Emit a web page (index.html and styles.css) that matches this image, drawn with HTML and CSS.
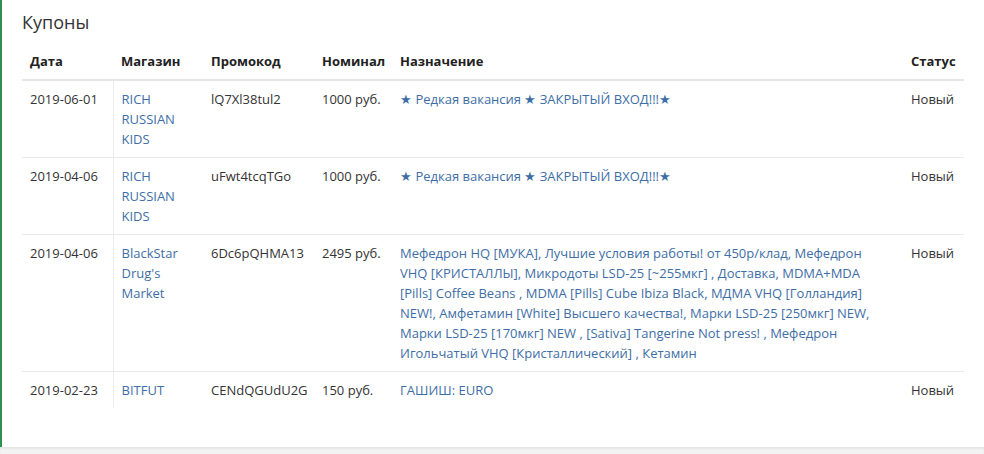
FILE: index.html
```html
<!DOCTYPE html>
<html lang="ru">
<head>
<meta charset="utf-8">
<title>Купоны</title>
<link rel="stylesheet" href="styles.css">
</head>
<body>
<div class="panel">
  <h2 class="title">Купоны</h2>
  <table class="coupons">
    <colgroup>
      <col class="c-date"><col class="c-shop"><col class="c-code"><col class="c-sum"><col class="c-desc"><col class="c-status">
    </colgroup>
    <thead>
      <tr><th>Дата</th><th>Магазин</th><th>Промокод</th><th>Номинал</th><th>Назначение</th><th>Статус</th></tr>
    </thead>
    <tbody>
      <tr>
        <td class="date">2019-06-01</td>
        <td class="shop"><a href="#">RICH RUSSIAN KIDS</a></td>
        <td class="nw">lQ7Xl38tul2</td>
        <td class="nw">1000 руб.</td>
        <td><a href="#">★ Редкая вакансия ★ ЗАКРЫТЫЙ ВХОД!!!★</a></td>
        <td>Новый</td>
      </tr>
      <tr>
        <td class="date">2019-04-06</td>
        <td class="shop"><a href="#">RICH RUSSIAN KIDS</a></td>
        <td class="nw">uFwt4tcqTGo</td>
        <td class="nw">1000 руб.</td>
        <td><a href="#">★ Редкая вакансия ★ ЗАКРЫТЫЙ ВХОД!!!★</a></td>
        <td>Новый</td>
      </tr>
      <tr>
        <td class="date">2019-04-06</td>
        <td class="shop"><a href="#">BlackStar Drug's Market</a></td>
        <td class="nw">6Dc6pQHMA13</td>
        <td class="nw">2495 руб.</td>
        <td class="desc"><a href="#">Мефедрон HQ [МУКА], Лучшие условия работы! от 450р/клад, Мефедрон<br>VHQ [КРИСТАЛЛЫ], Микродоты LSD-25 [~255мкг] , Доставка, MDMA+MDA<br>[Pills] Coffee Beans , MDMA [Pills] Cube Ibiza Black, МДМА VHQ [Голландия]<br>NEW!, Амфетамин [White] Высшего качества!, Марки LSD-25 [250мкг] NEW,<br>Марки LSD-25 [170мкг] NEW , [Sativa] Tangerine Not press! , Мефедрон<br>Игольчатый VHQ [Кристаллический] , Кетамин</a></td>
        <td>Новый</td>
      </tr>
      <tr>
        <td class="date">2019-02-23</td>
        <td class="shop"><a href="#">BITFUT</a></td>
        <td class="nw">CENdQGUdU2G</td>
        <td class="nw">150 руб.</td>
        <td><a href="#">ГАШИШ: EURO</a></td>
        <td>Новый</td>
      </tr>
    </tbody>
  </table>
</div>
<div class="bottom"></div>
</body>
</html>
```
FILE: styles.css
```css
html, body {
  margin: 0;
  padding: 0;
  background: #ffffff;
}
body {
  font-family: "Open Sans", "Liberation Sans", sans-serif;
  font-size: 13px;
  color: #333333;
}
.panel {
  border-left: 2px solid #2f8f4e;
  background: #ffffff;
  padding: 10px 20px 39px 20px;
  height: 398px;
}
.title {
  margin: 0 0 9px 0;
  font-size: 18px;
  line-height: 24px;
  font-weight: 400;
  color: #333333;
}
.coupons {
  width: 942px;
  border-collapse: collapse;
  table-layout: fixed;
}
.c-date { width: 91px; }
.c-shop { width: 90px; }
.c-code { width: 111px; }
.c-sum { width: 78px; }
.c-desc { width: 511px; }
.c-status { width: 61px; }
.coupons th {
  text-align: left;
  font-weight: 700;
  color: #222222;
  padding: 8px;
  line-height: 20px;
  border-bottom: 2px solid #e6e6e6;
  white-space: nowrap;
}
.coupons td {
  padding: 8px;
  line-height: 20px;
  vertical-align: top;
  border-top: 1px solid #e9e9e9;
}
.coupons tbody tr:first-child td {
  border-top: none;
}
.coupons td.date {
  border-right: 1px solid #ededed;
}
.coupons td.nw {
  white-space: nowrap;
}
.coupons a {
  color: #3e6ea6;
  text-decoration: none;
}
.coupons td.desc {
  white-space: nowrap;
}
.bottom {
  height: 7px;
  background: #f3f3f3;
  border-top: 1px solid #e4e4e4;
  box-shadow: inset 0 1px 2px rgba(0,0,0,0.05);
}
```
